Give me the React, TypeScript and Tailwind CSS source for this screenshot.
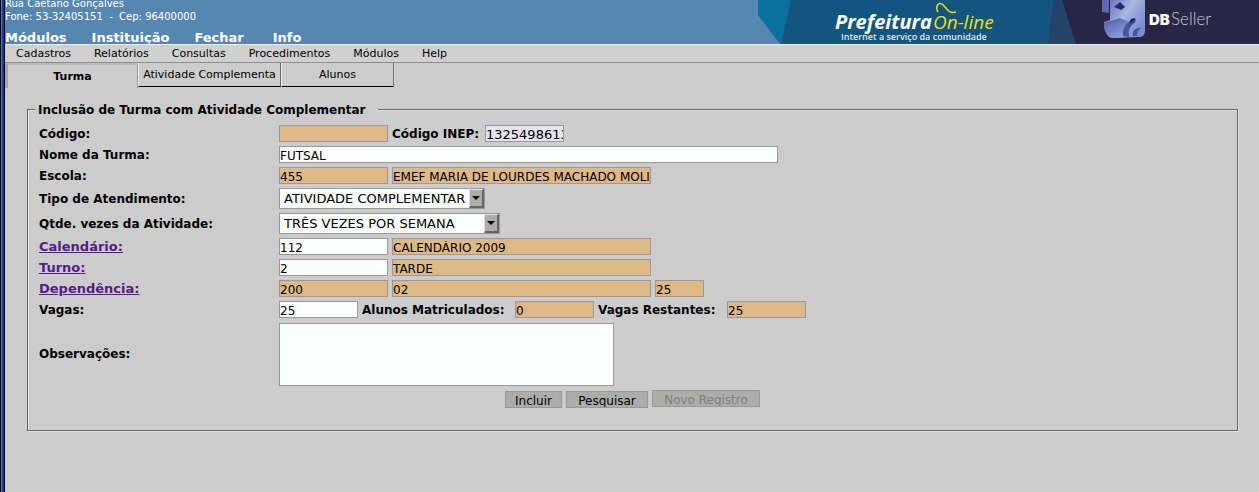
import React from "react";

const FIELD =
  "h-[17px] min-w-0 rounded-none border border-[#999] px-0 pt-[2px] leading-[14px] text-black outline-none";
const TAN = "bg-[#deb887] text-xs";
const WHITE = "bg-[#fafffd] text-xs";
const INLINE_LABEL = "shrink-0 text-xs leading-4 font-bold whitespace-nowrap";
const BUTTON = "h-[17px] overflow-hidden border border-[#999] bg-[#acacaa] whitespace-nowrap";

function Row({
  label,
  htmlFor,
  link,
  children,
}: {
  label: string;
  htmlFor: string;
  link?: boolean;
  children: React.ReactNode;
}) {
  return (
    <div className="flex items-center">
      <label htmlFor={htmlFor} className="w-60 shrink-0 text-xs leading-4 font-bold">
        {link ? (
          <a href="#" className="text-[13px] text-[#551a8b] underline">
            {label}
          </a>
        ) : (
          label
        )}
      </label>
      <div className="flex min-w-0 items-center gap-1">{children}</div>
    </div>
  );
}

function Choice({ id, value, width }: { id: string; value: string; width: string }) {
  return (
    <div className={`relative h-[21px] ${width}`}>
      <select
        id={id}
        className="block h-full w-full appearance-none rounded-none border border-[#999] bg-[#fafffd] pl-1 text-[13px] leading-4 text-black outline-none"
      >
        <option>{value}</option>
      </select>
      <span className="pointer-events-none absolute inset-y-px right-px flex w-[15px] items-center justify-center border-t border-r-2 border-b-2 border-l border-t-[#e0e0e0] border-r-[#666] border-b-[#666] border-l-[#e0e0e0] bg-[#acacaa]">
        <svg width="8" height="4" viewBox="0 0 8 4" aria-hidden="true">
          <path d="M0 0h8L4 4z" fill="#000" />
        </svg>
      </span>
    </div>
  );
}

function Banner() {
  return (
    <svg width="501" height="44" viewBox="0 0 501 44" className="block shrink-0">
      <defs>
        <linearGradient id="cube" x1="0" y1="0" x2="1" y2="0.6">
          <stop offset="0" stopColor="#5a66b4" />
          <stop offset="0.55" stopColor="#a9b6e2" />
          <stop offset="1" stopColor="#7b8bd0" />
        </linearGradient>
        <linearGradient id="base" x1="0" y1="0" x2="0.6" y2="1">
          <stop offset="0" stopColor="#4c58a4" />
          <stop offset="1" stopColor="#8f9fdc" />
        </linearGradient>
      </defs>
      <path d="M0 0H501V44H22L0 15z" fill="#0a709f" />
      <path d="M33 0H501V44H23z" fill="#13557e" />
      <path d="M295 0H501V44H290z" fill="#24436a" />
      <path d="M304 0H501V44H318z" fill="#272646" />
      <text x="77" y="29" fill="#fff" className="font-['Open_Sans',sans-serif] text-[20px] font-bold italic">
        Prefeitura
      </text>
      <text x="175" y="29" fill="#f1dc14" className="font-['Open_Sans',sans-serif] text-[19px] font-normal italic">
        On-line
      </text>
      <path
        d="M180 12C177 7 180 2 184 4C189 8 190 14 198 12"
        fill="none"
        stroke="#f1dc14"
        strokeWidth="1.5"
      />
      <text x="83" y="40" fill="#dcebf3" className="font-['Open_Sans',sans-serif] text-[9px] font-semibold">
        Internet a serviço da comunidade
      </text>
      <path d="M344 0H351V13L344 12z" fill="#6269ae" />
      <path d="M352 0H387L387 30C387 35 385 37 381 37L354 38C350 37 348 34 346 27L346 22L352 20z" fill="url(#cube)" />
      <path d="M346 23L362 18L371 22L367 37L354 38C350 37 348 34 346 27z" fill="url(#base)" />
      <path d="M356 7L362 2L367 7L363 10z" fill="#2b2870" />
      <path d="M365 36C364 28 369 21 376 19C380 20 377 23 374 25C371 28 370 32 371 37z" fill="#46539f" />
      <path d="M372 24C371 19 375 17 378 19C376 20 374 22 372 24z" fill="#23235a" />
      <path d="M375 36C374 31 378 27 383 28C380 30 379 33 379 36z" fill="#46539f" />
      <text x="391" y="25" fill="#fff" className="font-[Inter,sans-serif] text-[15px] font-black">
        DB
      </text>
      <text x="413" y="25" fill="#c9c9dc" className="font-[Lato,sans-serif] text-[17px] font-light">
        Seller
      </text>
    </svg>
  );
}

export default function App() {
  return (
    <div className="flex min-h-screen bg-[#ccc] font-['DejaVu_Sans',sans-serif] text-black">
      <div className="w-[5px] shrink-0 border-x border-black bg-[#0f3fa0]">
        <div className="h-full min-h-screen w-px bg-[#4b78a4]" />
      </div>
      <div className="min-w-0 flex-1">
        <header className="flex h-11 justify-between overflow-hidden bg-[#5786b3] text-white">
          <div className="flex shrink-0 flex-col justify-end">
            <address className="text-[10px] leading-[13px] whitespace-pre not-italic">
              <div>Rua Caetano Gonçalves</div>
              <div>Fone: 53-32405151  -  Cep: 96400000</div>
            </address>
            <nav className="flex gap-[25px] pt-2 text-[13px] leading-[13px] font-bold">
              <a href="#">Módulos</a>
              <a href="#">Instituição</a>
              <a href="#">Fechar</a>
              <a href="#" className="pl-1">Info</a>
            </nav>
          </div>
          <Banner />
        </header>

        <nav className="flex h-[19px] items-center gap-[23px] border-t border-b border-t-[#eee] border-b-[#8c908c] bg-[#d0d0d0] pt-0.5 pl-[11px] text-[11px]">
          <a href="#">Cadastros</a>
          <a href="#">Relatórios</a>
          <a href="#">Consultas</a>
          <a href="#">Procedimentos</a>
          <a href="#">Módulos</a>
          <a href="#">Help</a>
        </nav>

        <div className="flex items-start text-[11px]" role="tablist">
          <button
            role="tab"
            aria-selected="true"
            className="h-[25px] w-[133px] border-t-2 border-r border-l-[3px] border-t-[#bbb] border-r-[#999] border-l-[#a5a5a5] pt-0.5 font-bold"
          >
            Turma
          </button>
          <button
            role="tab"
            aria-selected="false"
            className="h-6 w-[143px] border-r border-b border-l border-r-[#666] border-b-black border-l-[#eee] pt-0.5 whitespace-nowrap"
          >
            Atividade Complementa
          </button>
          <button
            role="tab"
            aria-selected="false"
            className="h-6 w-[113px] border-r border-b border-l border-r-[#777] border-b-black border-l-[#eee] pt-0.5"
          >
            Alunos
          </button>
        </div>

        <form className="pt-2.5 pr-[21px] pl-[22px]" onSubmit={(e) => e.preventDefault()}>
          <fieldset className="min-w-0 border border-[#666] px-[11px] pb-[22px] shadow-[1px_1px_0_#e0e0e0,inset_1px_1px_0_#e0e0e0]">
            <legend className="-ml-1 bg-[#ccc] pt-[3px] pr-3 pl-[3px] text-xs leading-[19px] font-bold">
              Inclusão de Turma com Atividade Complementar
            </legend>
            <div className="flex flex-col gap-1 pt-[5px]">
              <Row label="Código:" htmlFor="codigo">
                <input id="codigo" readOnly className={`${FIELD} ${TAN} w-[109px]`} />
                <label htmlFor="inep" className={`${INLINE_LABEL} w-[89px]`}>
                  Código INEP:
                </label>
                <input id="inep" defaultValue="1325498613" className={`${FIELD} w-[79px] bg-[#e6e4f1] text-[13px]`} />
              </Row>
              <Row label="Nome da Turma:" htmlFor="nome">
                <input id="nome" defaultValue="FUTSAL" className={`${FIELD} ${WHITE} w-[499px]`} />
              </Row>
              <Row label="Escola:" htmlFor="escola">
                <input id="escola" readOnly value="455" className={`${FIELD} ${TAN} w-[109px]`} />
                <input
                  aria-label="Nome da escola"
                  readOnly
                  value="EMEF MARIA DE LOURDES MACHADO MOLINA"
                  className={`${FIELD} ${TAN} w-[259px]`}
                />
              </Row>
              <Row label="Tipo de Atendimento:" htmlFor="tipo">
                <Choice id="tipo" value="ATIVIDADE COMPLEMENTAR" width="w-[206px]" />
              </Row>
              <Row label="Qtde. vezes da Atividade:" htmlFor="vezes">
                <Choice id="vezes" value="TRÊS VEZES POR SEMANA" width="w-[221px]" />
              </Row>
              <Row label="Calendário:" htmlFor="calendario" link>
                <input id="calendario" defaultValue="112" className={`${FIELD} ${WHITE} w-[109px]`} />
                <input
                  aria-label="Nome do calendário"
                  readOnly
                  value="CALENDÁRIO 2009"
                  className={`${FIELD} ${TAN} w-[259px]`}
                />
              </Row>
              <Row label="Turno:" htmlFor="turno" link>
                <input id="turno" defaultValue="2" className={`${FIELD} ${WHITE} w-[109px]`} />
                <input aria-label="Nome do turno" readOnly value="TARDE" className={`${FIELD} ${TAN} w-[259px]`} />
              </Row>
              <Row label="Dependência:" htmlFor="dependencia" link>
                <input id="dependencia" readOnly value="200" className={`${FIELD} ${TAN} w-[109px]`} />
                <input aria-label="Nome da dependência" readOnly value="02" className={`${FIELD} ${TAN} w-[259px]`} />
                <input aria-label="Capacidade" readOnly value="25" className={`${FIELD} ${TAN} w-[49px]`} />
              </Row>
              <Row label="Vagas:" htmlFor="vagas">
                <input id="vagas" defaultValue="25" className={`${FIELD} ${WHITE} w-[79px]`} />
                <label htmlFor="matriculados" className={`${INLINE_LABEL} w-[149px]`}>
                  Alunos Matriculados:
                </label>
                <input id="matriculados" readOnly value="0" className={`${FIELD} ${TAN} w-[79px]`} />
                <label htmlFor="restantes" className={`${INLINE_LABEL} w-[125px]`}>
                  Vagas Restantes:
                </label>
                <input id="restantes" readOnly value="25" className={`${FIELD} ${TAN} w-[79px]`} />
              </Row>
              <Row label="Observações:" htmlFor="obs">
                <textarea
                  id="obs"
                  className="mt-px block h-[63px] w-[335px] resize-none border border-[#999] bg-[#fafffd] text-xs outline-none"
                />
              </Row>
            </div>
            <div className="flex items-start justify-center gap-1 pt-1 text-xs leading-[18px]">
              <button className={`${BUTTON} mt-px w-[57px]`}>Incluir</button>
              <button className={`${BUTTON} mt-px w-[82px]`}>Pesquisar</button>
              <button disabled className={`${BUTTON} w-[108px] text-[#808080]`}>
                Novo Registro
              </button>
            </div>
          </fieldset>
        </form>
      </div>
    </div>
  );
}
